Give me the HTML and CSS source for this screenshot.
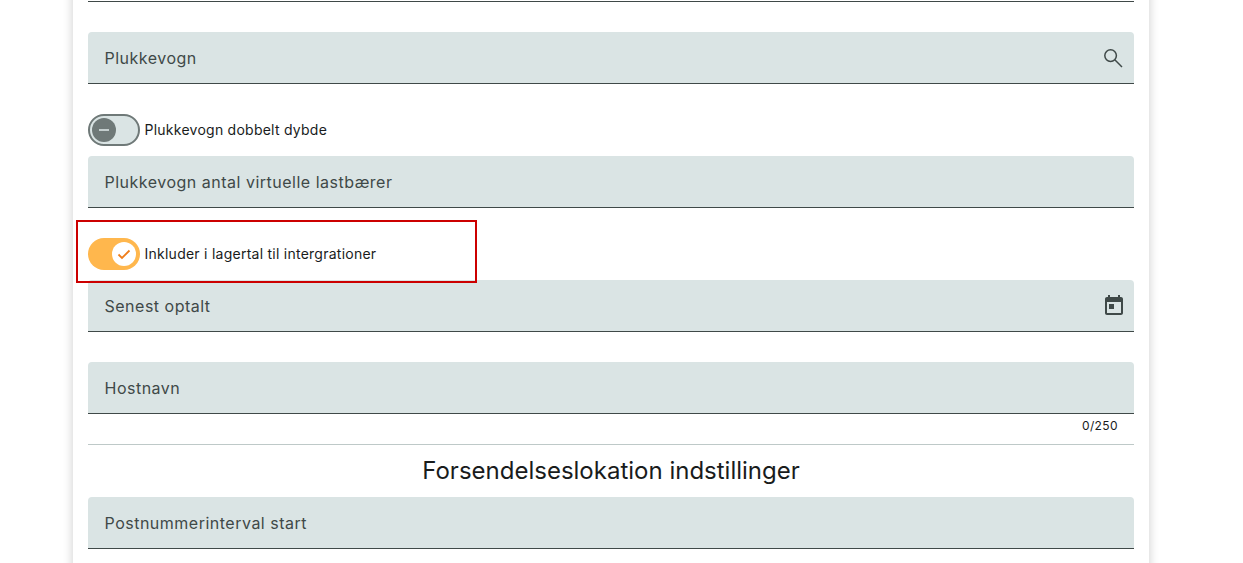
FILE: index.html
```html
<!DOCTYPE html>
<html>
<head>
    <title>Lokation</title>
    <meta name="viewport" content="width=device-width, initial-scale=1.0">
    <link rel="stylesheet" href="styles.css">
</head>
<body>
    <div class="card">
        <div class="field-end"></div>

        <div class="field">
            <span class="field-label">Plukkevogn</span>
            <svg class="field-icon field-icon-line" viewBox="0 0 24 24"><circle cx="8.6" cy="9.6" r="5.8"/><path d="M12.8 13.8L20 21"/></svg>
        </div>

        <div class="toggle-row">
            <div class="toggle">
                <div class="toggle-handle">
                    <svg viewBox="0 0 16 16"><path d="M3 8h10" /></svg>
                </div>
            </div>
            <span class="toggle-label">Plukkevogn dobbelt dybde</span>
        </div>

        <div class="field">
            <span class="field-label">Plukkevogn antal virtuelle lastbærer</span>
        </div>

        <div class="toggle-row">
            <div class="highlight"></div>
            <div class="toggle toggle-on">
                <div class="toggle-handle">
                    <svg viewBox="0 0 16 16"><path d="M2.5 8.5l3.5 3.5 7.5-7.5" /></svg>
                </div>
            </div>
            <span class="toggle-label">Inkluder i lagertal til intergrationer</span>
        </div>

        <div class="field">
            <span class="field-label">Senest optalt</span>
            <svg class="field-icon" viewBox="0 0 24 24"><path d="M19 3h-1V1h-2v2H8V1H6v2H5c-1.11 0-1.99.9-1.99 2L3 19c0 1.1.89 2 2 2h14c1.1 0 2-.9 2-2V5c0-1.1-.9-2-2-2zm0 16H5V8h14v11zM7 10h5v5H7z"/></svg>
        </div>

        <div class="field">
            <span class="field-label">Hostnavn</span>
        </div>
        <div class="field-hint">0/250</div>

        <hr class="divider">
        <h2 class="section-title">Forsendelseslokation indstillinger</h2>

        <div class="field">
            <span class="field-label">Postnummerinterval start</span>
        </div>
    </div>
</body>
</html>
```

FILE: styles.css
```css
html, body {
    height: 100%;
}

body {
    margin: 0;
    background-color: #fff;
    font-family: "Inter", "Liberation Sans", sans-serif;
    overflow: hidden;
}

/* the card is scrolled, its top is above the window */
.card {
    width: 1046px;
    margin: -20px 0 0 73px;
    padding: 21px 15px 14px;
    background-color: #fff;
    box-shadow: 0 1px 10px rgba(0, 0, 0, 0.2);
}

.field-end {
    height: 1px;
    margin-bottom: 30px;
    background-color: #3f4948;
}

.field {
    display: flex;
    align-items: center;
    justify-content: space-between;
    box-sizing: border-box;
    height: 52px;
    margin-bottom: 30px;
    padding: 0 8px 0 16.5px;
    background-color: #dae4e4;
    border-bottom: 1px solid #3f4948;
    border-radius: 4px 4px 0 0;
}

.field-label {
    font-size: 16px;
    letter-spacing: 0.5px;
    color: #3f4948;
}

.field-icon {
    width: 24px;
    height: 24px;
    fill: #3f4948;
}

.field-icon-line {
    fill: none;
    stroke: #3f4948;
    stroke-width: 1.5;
}

.toggle-row {
    position: relative;
    display: flex;
    align-items: center;
    height: 32px;
    margin-bottom: 10px;
}

.toggle {
    display: flex;
    align-items: center;
    box-sizing: border-box;
    width: 52px;
    height: 32px;
    padding-left: 2px;
    background-color: #dae4e4;
    border: 2px solid #6f7978;
    border-radius: 16px;
}

.toggle-handle {
    display: flex;
    align-items: center;
    justify-content: center;
    width: 24px;
    height: 24px;
    background-color: #6f7978;
    border-radius: 50%;
}

.toggle-handle svg {
    width: 16px;
    height: 16px;
    fill: none;
    stroke: #dae4e4;
    stroke-width: 1.6;
}

.toggle-on {
    justify-content: flex-end;
    padding: 0 4px 0 0;
    background-color: #ffb74d;
    border: none;
}

.toggle-on .toggle-handle {
    background-color: #fff;
}

.toggle-on .toggle-handle svg {
    stroke: #ef7d1a;
    stroke-width: 1.8;
}

.toggle-label {
    margin: 0 0 2px 4.5px;
    font-size: 14px;
    letter-spacing: 0.25px;
    color: #191c1c;
}

.highlight {
    position: absolute;
    top: -18px;
    left: -12px;
    box-sizing: border-box;
    width: 401px;
    height: 63px;
    border: 2px solid #cc0000;
}

.field-hint {
    height: 15px;
    margin-top: -26px;
    margin-bottom: 11px;
    padding: 0 16px;
    text-align: right;
    font-size: 12px;
    line-height: 15px;
    letter-spacing: 0.4px;
    color: #191c1c;
}

.divider {
    height: 1px;
    margin: 0;
    background-color: #bec9c8;
    border: none;
}

.section-title {
    height: 52px;
    margin: 0;
    text-align: center;
    font-size: 24px;
    font-weight: 400;
    line-height: 52px;
    color: #191c1c;
}
```
